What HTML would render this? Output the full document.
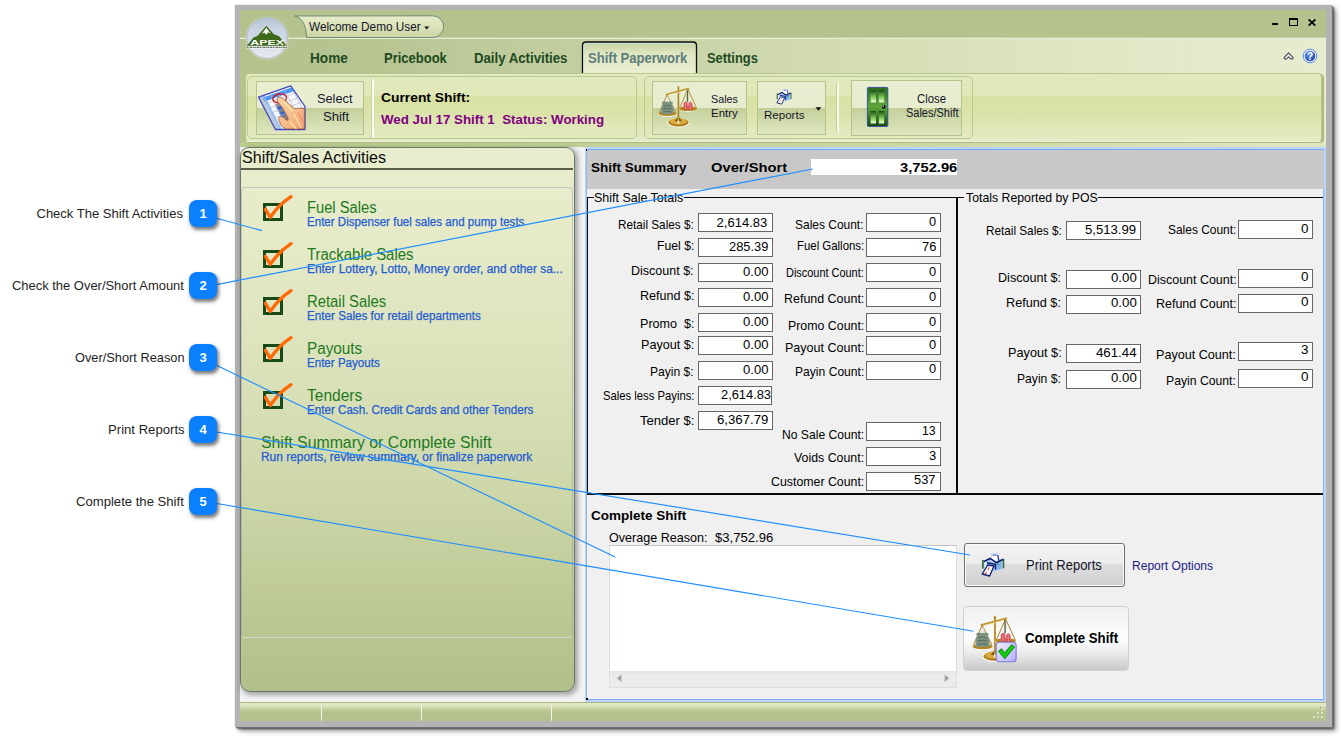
<!DOCTYPE html>
<html>
<head>
<meta charset="utf-8">
<title>Shift Paperwork</title>
<style>
*{box-sizing:border-box;margin:0;padding:0}
html,body{width:1341px;height:736px;overflow:hidden;background:#fff}
body{font-family:"Liberation Sans",sans-serif;font-size:12px;color:#000;position:relative}
.a{position:absolute}
.t{position:absolute;white-space:nowrap;transform-origin:0 0}
svg{overflow:visible}
</style>
</head>
<body>
<div class="a" style="left:235px;top:5px;width:1097px;height:722px;background:#b3b3b3;box-shadow:-1px -1px 0 #f2f2f2, 1px 1px 0 #707070, 2px 2px 2px rgba(0,0,0,.6), 4px 4px 5px rgba(0,0,0,.4);"></div>
<div class="a" style="left:240px;top:10px;width:1086px;height:711px;background:#b4c28e;"></div>
<div class="a" style="left:240px;top:37px;width:1086px;height:2px;background:linear-gradient(180deg,#c6d0a8 0,#c6d0a8 50%,#e9edd8 50%,#e9edd8 100%);"></div>
<div class="a" style="left:240px;top:39px;width:1086px;height:108px;background:linear-gradient(90deg,#b4c28e 0,#b6c491 10%,#c5d0a3 35%,#d6deb8 60%,#e3e9c8 85%,#e7ecce 100%);"></div>
<svg class="a" style="left:290px;top:12px" width="160" height="30" viewBox="290 12 160 30">
<defs><linearGradient id="wg" x1="0" y1="0" x2="0" y2="1"><stop offset="0" stop-color="#e6ecca"/><stop offset=".45" stop-color="#dde4bb"/><stop offset="1" stop-color="#cbd5a4"/></linearGradient></defs>
<path d="M294.5 16 C303 18 306 26 306.5 37.5 L432.800 37.500 A10.850 10.850 0 0 0 432.800 15.800 Z" fill="url(#wg)" stroke="#6f8a78" stroke-width="1"/>
<path d="M424.2 26.6 h5 l-2.5 2.8 z" fill="#111"/>
</svg>
<span class="t" style="left:308.80px;top:21.00px;font-size:12.5px;line-height:12.5px;transform:scaleX(0.9414);color:#141428;">Welcome Demo User</span>
<div class="a" style="left:1271.8px;top:22.6px;width:6.2000000000000455px;height:2.5px;background:#000;border-radius:.8px;"></div>
<div class="a" style="left:1289px;top:18px;width:9px;height:8px;border:1px solid #000;border-top-width:2px;"></div>
<svg class="a" style="left:1307px;top:18px" width="10" height="9" viewBox="0 0 10 9"><path d="M1.600 1.500 L8.400 7.600 M8.400 1.500 L1.600 7.600" stroke="#000" stroke-width="1.700"/></svg>
<svg class="a" style="left:1282px;top:50px" width="14" height="12" viewBox="0 0 14 12"><path d="M2.300 7.300 L6.600 2.900 L10.900 7.300 Q11.300 8.900 9.600 9.100 Q8.500 9.100 6.600 6.900 Q4.700 9.100 3.600 9.100 Q1.900 8.900 2.300 7.300 Z" fill="#f6fae0" stroke="#454e68" stroke-width="1.200" stroke-linejoin="round"/></svg>
<svg class="a" style="left:1302px;top:48px" width="16" height="16" viewBox="0 0 16 16">
<defs><radialGradient id="hg" cx=".4" cy=".35" r=".7"><stop offset="0" stop-color="#6f9cf0"/><stop offset="1" stop-color="#1c3fb0"/></radialGradient></defs>
<circle cx="8" cy="8" r="6.8" fill="#fff" stroke="#4b86e8" stroke-width="1"/><circle cx="8" cy="8" r="5.3" fill="url(#hg)"/>
<text x="8" y="11.6" font-family="Liberation Sans" font-weight="bold" font-size="10" text-anchor="middle" fill="#fff">?</text></svg>
<span class="t" style="left:310.10px;top:51.00px;font-size:14px;line-height:14px;transform:scaleX(0.9718);font-weight:bold;color:#1f4a22;">Home</span>
<span class="t" style="left:383.90px;top:51.00px;font-size:14px;line-height:14px;transform:scaleX(0.9278);font-weight:bold;color:#1f4a22;">Pricebook</span>
<span class="t" style="left:473.80px;top:51.00px;font-size:14px;line-height:14px;transform:scaleX(0.9428);font-weight:bold;color:#1f4a22;">Daily Activities</span>
<svg class="a" style="left:580px;top:39px" width="120" height="36" viewBox="580 39 120 36">
<defs><linearGradient id="tg" x1="0" y1="0" x2="0" y2="1"><stop offset="0" stop-color="#c4cfa2"/><stop offset=".35" stop-color="#dfe6c0"/><stop offset="1" stop-color="#e9eed2"/></linearGradient></defs>
<path d="M582.5 74 L582.5 45.5 Q582.5 42 586 42 L693 42 Q696.5 42 696.5 45.5 L696.5 74 Z" fill="url(#tg)"/>
<path d="M582.5 73 L582.5 45.5 Q582.5 42 586 42 L693 42 Q696.5 42 696.5 45.5 L696.5 73" fill="none" stroke="#0c0c0c" stroke-width="1.3"/>
<path d="M584 73 L584 46 Q584 43.6 586.5 43.6 L692.5 43.6" fill="none" stroke="#c8eef0" stroke-width="1" opacity=".8"/>
</svg>
<span class="t" style="left:587.80px;top:51.00px;font-size:14px;line-height:14px;transform:scaleX(0.9317);font-weight:bold;color:#5c7d7c;">Shift Paperwork</span>
<span class="t" style="left:706.80px;top:51.00px;font-size:14px;line-height:14px;transform:scaleX(0.9216);font-weight:bold;color:#1f4a22;">Settings</span>
<div class="a" style="left:246px;top:74px;width:1078px;height:69px;background:#a9b981;border-radius:4px;"></div>
<div class="a" style="left:245px;top:73px;width:1077px;height:69px;border-radius:4px;border:1px solid #b7c78e;background:linear-gradient(180deg,#e2e9bd 0,#e0e8b8 32%,#d8e0a2 32.5%,#dbe3ab 60%,#e5ebc6 100%);"></div>
<div class="a" style="left:240px;top:143px;width:1086px;height:4px;background:linear-gradient(90deg,#bccd8f 0,#c1d194 30%,#cad79f 60%,#dbe3b9 90%,#dfe6c0 100%);"></div>
<div class="a" style="left:246px;top:141px;width:1075px;height:1px;background:#edf1d8;"></div>
<div class="a" style="left:247px;top:76px;width:390px;height:63px;border:1px solid #b9c992;border-radius:5px;"></div>
<div class="a" style="left:644px;top:76px;width:329px;height:63px;border:1px solid #b9c992;border-radius:5px;"></div>
<div class="a" style="left:256px;top:80.5px;width:108px;height:54.0px;border:1px solid #b3c48b;background:linear-gradient(180deg,#e9eed2 0,#e7ecce 50.9%,#c3cf9b 50.9%,#d1dbad 75%,#e0e7c2 100%);"></div>
<div class="a" style="left:652px;top:80.5px;width:95px;height:54.0px;border:1px solid #b3c48b;background:linear-gradient(180deg,#e9eed2 0,#e7ecce 50.9%,#c3cf9b 50.9%,#d1dbad 75%,#e0e7c2 100%);"></div>
<div class="a" style="left:757px;top:80.5px;width:69px;height:54.0px;border:1px solid #b3c48b;background:linear-gradient(180deg,#e9eed2 0,#e7ecce 50.9%,#c3cf9b 50.9%,#d1dbad 75%,#e0e7c2 100%);"></div>
<div class="a" style="left:851px;top:79.5px;width:111px;height:56.0px;border:1px solid #b3c48b;background:linear-gradient(180deg,#e9eed2 0,#e7ecce 50.9%,#c3cf9b 50.9%,#d1dbad 75%,#e0e7c2 100%);"></div>
<div class="a" style="left:371px;top:79px;width:1px;height:59px;background:#c9d4a6;"></div>
<div class="a" style="left:372px;top:79px;width:2px;height:59px;background:#fbfcf4;"></div>
<div class="a" style="left:836px;top:83px;width:1px;height:49px;background:#c3cea0;"></div>
<div class="a" style="left:837px;top:83px;width:2px;height:49px;background:#f6f8ea;"></div>
<svg class="a" style="left:257px;top:83px" width="50" height="50" viewBox="257 83 50 50">
<defs><linearGradient id="sk" x1="0" y1="0" x2="1" y2="1"><stop offset="0" stop-color="#fbcfa6"/><stop offset=".6" stop-color="#f7b98a"/><stop offset="1" stop-color="#f0a070"/></linearGradient>
<clipPath id="sc"><path d="M258.6 97.2 L290.7 85.9 L305 106.5 L305 129.5 L275.4 129.5 Z"/></clipPath></defs>
<path d="M258.6 97.2 L290.7 85.9 L305 106.5 L305 129.5 L275.4 129.5 Z" fill="#f7f8fc"/>
<g clip-path="url(#sc)">
<path d="M260.5 98.600 L291.500 87.600 L293.800 91.200 L262.600 102.200 Z" fill="#4a94f2"/>
<path d="M258.600 97.200 L261.800 96.200 L279 129.500 L275.400 129.500 Z" fill="#c4c8d0"/>
<path d="M261.800 96.200 L264.600 95.200 L282 129.500 L279 129.500 Z" fill="#7fb2f4" opacity=".8"/>
<path d="M274.800 104.500 L280.800 102.400 L294 128 L287.800 130.200 Z" fill="#7e8288"/>
<path d="M276.600 107.800 L281.400 106.100 L283.200 109.600 L278.400 111.300 Z M279.200 113 L284 111.300 L285.800 114.800 L281 116.500 Z" fill="#2f62d0"/>
<path d="M266 103.500 L296.500 92.500 M268.500 108.300 L299.500 97.300 M271 113.100 L302.500 102 M273.500 118 L305 107 M270 94 L288 129 M277 91.500 L295 126.500 M284 89 L302 124 M291 86.500 L308 119.500" stroke="#b6bccb" stroke-width=".7" fill="none"/>
</g>
<path d="M258.600 97.200 L290.700 85.900 L305 106.500 L305 129.500 L275.400 129.500 Z" fill="none" stroke="#3d49c6" stroke-width="1.300" stroke-linejoin="round"/>
<ellipse cx="279.700" cy="98.400" rx="6.900" ry="4.500" fill="none" stroke="#c81c24" stroke-width="1.400" transform="rotate(-8 279.700 98.400)"/>
<path d="M278.100 97.200 Q280.400 96.600 282.600 98.400 L288.300 103.300 L294 108.600 Q298.900 107.600 304.400 108.800 L304.400 129 L285.900 129 Q282.200 127.600 281 125.300 L278.900 120.400 Q278.300 118 279.300 117.100 Q280 116 282.600 116.700 L285.900 119.600 L287.500 120.400 L288.300 118.700 L285.900 113.900 L282.600 108.200 L278.100 102.400 Q276.600 100.400 277.300 99.200 Q277.400 97.800 278.100 97.200 Z" fill="url(#sk)" stroke="#8e4a22" stroke-width=".7" stroke-linejoin="round"/>
<path d="M283 101 L292.500 111 M294 114.500 L301 127 M290 122 L296 128.500" stroke="#fdf0a8" stroke-width="1.300" fill="none" stroke-linecap="round" opacity=".9"/>
<path d="M298 112 L302.500 121" stroke="#f08868" stroke-width="1.100" fill="none" stroke-linecap="round" opacity=".7"/>
</svg>
<span class="t" style="left:317.40px;top:93.00px;font-size:12.5px;line-height:12.5px;transform:scaleX(1.0218);color:#15152a;">Select</span>
<span class="t" style="left:322.50px;top:111.00px;font-size:12.5px;line-height:12.5px;transform:scaleX(1.0435);color:#15152a;">Shift</span>
<span class="t" style="left:380.90px;top:92.00px;font-size:12px;line-height:12px;transform:scaleX(1.1523);font-weight:bold;">Current Shift:</span>
<span class="t" style="left:380.90px;top:114.00px;font-size:12px;line-height:12px;transform:scaleX(1.1104);font-weight:bold;color:#800080;white-space:pre;">Wed Jul 17 Shift 1  Status: Working</span>
<svg class="a" style="left:658px;top:86px" width="41" height="42" viewBox="0 0 41 42"><g>
<ellipse cx="20.5" cy="36.6" rx="11.2" ry="4.9" fill="#fff" opacity=".9"/>
<ellipse cx="20.5" cy="36.3" rx="10.3" ry="4.1" fill="#b07e18"/>
<ellipse cx="20.2" cy="35.3" rx="8.8" ry="3" fill="#d9ab40"/>
<path d="M16.6 35.2 L20.4 30.4 L24.2 35.2 Z" fill="#7a5a12"/>
<path d="M20.4 31.2 L19.2 37.8 L21.6 37.8 Z" fill="#f4e4b0"/>
<circle cx="20.400" cy="1.300" r="1.100" fill="#c9a040"/>
<path d="M20.400 1.500 L20.400 33" stroke="#a47a1c" stroke-width="1.600"/>
<path d="M19.8 3 L19.8 33" stroke="#e8c868" stroke-width=".5"/>
<path d="M8.5 8.5 L30.5 2.7" stroke="#c0962e" stroke-width="1.8" stroke-linecap="round"/>
<path d="M8.5 9.6 L30.5 3.8" stroke="#f6ecc8" stroke-width=".6"/>
<path d="M9.1 8.8 L1.2 26.6 M9.1 8.8 L17.8 26.6" stroke="#b08834" stroke-width=".9"/>
<path d="M29.9 3.2 L21.6 22 M29.9 3.2 L38.6 22" stroke="#b08834" stroke-width=".9"/>
<path d="M29.5 4.2 L29.5 16" stroke="#4e6a4a" stroke-width="1.3"/>
<ellipse cx="9.5" cy="28" rx="9.5" ry="2.9" fill="#fff" opacity=".8"/>
<ellipse cx="9.5" cy="27.6" rx="9" ry="2.5" fill="#b5841c"/>
<path d="M4.8 18.400 Q2.600 16 5.200 15.400 L13.400 15.400 Q16 16 14 18.400 Q17 23 14.800 28.200 L4 28.200 Q1.800 23 4.800 18.400 Z" fill="#7d9382"/>
<path d="M5.600 20 Q9.400 18.400 13 20 M5 23 Q9.400 21.400 13.800 23 M5.400 26 Q9.400 24.600 13.400 26" stroke="#5b7060" stroke-width="1" fill="none"/>
<path d="M7.600 15.400 L8.600 11.400 L10.600 11.400 L11.400 15.400 Z" fill="#e4e8e4"/>
<ellipse cx="30.1" cy="23.100" rx="9.500" ry="2.800" fill="#fff" opacity=".8"/>
<ellipse cx="30.1" cy="22.700" rx="9" ry="2.400" fill="#b5841c"/>
<path d="M25.600 17.200 L27.600 15.200 L29.600 17 L29.800 23.600 L25.600 23.400 Z M30.400 17.400 L32.200 15.600 L34.400 17.600 L34.400 23.400 L30.400 23.800 Z" fill="#d94f5c"/>
<path d="M27.400 17 L27.600 23 M32.200 17.200 L32.400 23.200" stroke="#f29aa0" stroke-width=".8"/>
</g></svg>
<span class="t" style="left:711.40px;top:94.00px;font-size:11.5px;line-height:11.5px;transform:scaleX(0.9386);color:#15152a;">Sales</span>
<span class="t" style="left:710.60px;top:108.00px;font-size:11.5px;line-height:11.5px;transform:scaleX(0.9948);color:#15152a;">Entry</span>
<svg class="a" style="left:776px;top:88px" width="16" height="17" viewBox="0 0 24 25"><g>
<rect x="1" y="8" width="1.900" height="8.500" fill="#3c6c3c"/>
<rect x="21.400" y="6.800" width="1.900" height="9.500" fill="#3c6c3c"/>
<path d="M2.800 9 L10 6 L21.500 8 L21.500 17 L13 19.500 L2.800 16 Z" fill="#a9cff6"/>
<path d="M14 10.500 L20.400 9 L20.400 16.600 L14 18.400 Z" fill="#7fb0ee"/>
<path d="M3.600 10 L5.200 9.500 L5.200 16 L3.600 15.500 Z" fill="#e8f4ff"/>
<path d="M10.500 1.500 L16.800 1 L18.200 9 L10 10 Z" fill="#fff" stroke="#a9b8d8" stroke-width=".5"/>
<path d="M11.600 3.200 L15.600 2.800" stroke="#3a62c4" stroke-width="1.300"/>
<path d="M16.600 3 L17.800 8.500" stroke="#1c3a9c" stroke-width="1.200"/>
<path d="M3 9.600 L9 6.400 L15.400 10.600 L22 7.400" fill="none" stroke="#0c1c6c" stroke-width="1.700" stroke-linejoin="round"/>
<path d="M6 10.800 L14.400 12.400 L14.400 17.600" fill="none" stroke="#0c1c6c" stroke-width="1.400"/>
<path d="M6.800 13 L13 14 L8.600 24 L1.200 22 Z" fill="#fff" stroke="#0c1c6c" stroke-width="1.300" stroke-linejoin="round"/>
<path d="M8.200 15.200 L7 18.400 M5.800 20 L3.800 22" stroke="#f05050" stroke-width="1.100"/>
<circle cx="16.800" cy="12.200" r=".8" fill="#0a8a2a"/>
</g></svg>
<span class="t" style="left:763.80px;top:110.00px;font-size:11.5px;line-height:11.5px;transform:scaleX(1.0033);color:#15152a;">Reports</span>
<svg class="a" style="left:815px;top:107px" width="7" height="5" viewBox="0 0 7 5"><path d="M.4 .3 h6 l-3 3.400 z" fill="#111"/></svg>
<svg class="a" style="left:866px;top:86px" width="24" height="42" viewBox="866 86 24 42">
<defs><linearGradient id="dg" x1="0" y1="0" x2="0" y2="1"><stop offset="0" stop-color="#2a6a20"/><stop offset=".5" stop-color="#5fa63c"/><stop offset="1" stop-color="#164412"/></linearGradient>
<linearGradient id="dp" x1="0" y1="0" x2="0" y2="1"><stop offset="0" stop-color="#184a14"/><stop offset=".55" stop-color="#7cc458"/><stop offset="1" stop-color="#eaffd2"/></linearGradient></defs>
<rect x="867.400" y="87.400" width="20.400" height="39" rx="1" fill="url(#dg)" stroke="#37569c" stroke-width="1"/>
<rect x="870.600" y="90" width="5.400" height="12.500" fill="url(#dp)"/><rect x="878.800" y="90" width="5.400" height="12.500" fill="url(#dp)"/>
<rect x="870.600" y="111" width="5.400" height="12.500" fill="url(#dp)"/><rect x="878.800" y="111" width="5.400" height="12.500" fill="url(#dp)"/>
<circle cx="883.800" cy="106.800" r="1.900" fill="#0c0c0c"/><circle cx="883.300" cy="106.200" r=".7" fill="#e8f4d8"/>
</svg>
<span class="t" style="left:917.30px;top:93.00px;font-size:12px;line-height:12px;transform:scaleX(0.9453);color:#15152a;">Close</span>
<span class="t" style="left:905.90px;top:107.00px;font-size:12px;line-height:12px;transform:scaleX(0.9152);color:#15152a;">Sales/Shift</span>
<svg class="a" style="left:244px;top:15px" width="46" height="46" viewBox="244 15 46 46">
<defs><linearGradient id="lg" x1="0" y1="0" x2="0" y2="1"><stop offset="0" stop-color="#b4c2d6"/><stop offset=".3" stop-color="#cbd5e3"/><stop offset=".52" stop-color="#cfd8e4"/><stop offset=".56" stop-color="#d6dce6"/><stop offset="1" stop-color="#e6e9ee"/></linearGradient></defs>
<circle cx="267.100" cy="38.100" r="21.600" fill="#cdd7b2"/>
<circle cx="267.100" cy="38.100" r="20.300" fill="url(#lg)" stroke="#9fabbb" stroke-width=".7"/>
<path d="M246.900 45.700 L253.500 37.600 L257.600 35.800 L266.400 25.800 L273.600 34 L279.400 36.600 L286.500 45.700 Z" fill="#3f6a1c"/>
<path d="M266.400 27.800 L261.800 33.800 L264.300 32.500 L266.200 34.700 L268 32.300 L270.700 33.700 Z" fill="#fff"/>
<text x="250.300" y="45.300" font-family="Liberation Sans" font-weight="bold" font-size="7.400" fill="#fff" textLength="33.600" lengthAdjust="spacingAndGlyphs">APEX</text>
<path d="M246 47.300 H287.400" stroke="#fff" stroke-width="2.400" opacity=".75"/>
<path d="M246.600 47.300 H287" stroke="#2f4220" stroke-width="1.100" stroke-dasharray="1.500 .6 .9 .6 2.200 .7"/>
</svg>
<div class="a" style="left:240px;top:147px;width:345px;height:555px;background:#f3f3f3;"></div>
<div class="a" style="left:240px;top:147px;width:335px;height:545px;border:1px solid #66796a;border-radius:9px 9px 10px 10px;box-shadow:2px 2px 5px 1px rgba(0,0,0,.33);background:linear-gradient(180deg,#e9edce 0,#e4e9c6 20%,#d9e0b8 45%,#ccd6a8 65%,#bcc895 85%,#b2bf8a 100%);"></div>
<span class="t" style="left:242.00px;top:149.00px;font-size:17px;line-height:17px;transform:scaleX(0.9474);color:#0c0c0c;">Shift/Sales Activities</span>
<div class="a" style="left:241px;top:168px;width:332px;height:2px;background:#5c5c48;"></div>
<div class="a" style="left:241px;top:187px;width:332px;height:451px;border:1px solid rgba(150,150,175,.45);border-radius:4px;border-bottom-color:rgba(215,220,215,.9);"></div>
<div class="a" style="left:263px;top:203px;width:20px;height:18px;border:3px solid #184a18;"></div>
<svg class="a" style="left:260px;top:192px" width="36" height="30" viewBox="260 192 36 30"><path d="M265.400 209.400 L270.300 217.400 C275.500 209.500 283 202 291 196.700" fill="none" stroke="#ff6a06" stroke-width="3.400" stroke-linecap="round" stroke-linejoin="round"/></svg>
<span class="t" style="left:306.90px;top:200.00px;font-size:16px;line-height:16px;transform:scaleX(0.9194);color:#1d7a1d;">Fuel Sales</span>
<span class="t" style="left:306.90px;top:216.00px;font-size:12px;line-height:12px;transform:scaleX(0.9643);color:#1f5cd2;-webkit-text-stroke:.25px #1f5cd2;">Enter Dispenser fuel sales and pump tests</span>
<div class="a" style="left:263px;top:250px;width:20px;height:18px;border:3px solid #184a18;"></div>
<svg class="a" style="left:260px;top:239px" width="36" height="30" viewBox="260 192 36 30"><path d="M265.400 209.400 L270.300 217.400 C275.500 209.500 283 202 291 196.700" fill="none" stroke="#ff6a06" stroke-width="3.400" stroke-linecap="round" stroke-linejoin="round"/></svg>
<span class="t" style="left:306.90px;top:247.00px;font-size:16px;line-height:16px;transform:scaleX(0.9332);color:#1d7a1d;">Trackable Sales</span>
<span class="t" style="left:306.90px;top:263.00px;font-size:12px;line-height:12px;transform:scaleX(0.9914);color:#1f5cd2;-webkit-text-stroke:.25px #1f5cd2;">Enter Lottery, Lotto, Money order, and other sa...</span>
<div class="a" style="left:263px;top:297px;width:20px;height:18px;border:3px solid #184a18;"></div>
<svg class="a" style="left:260px;top:286px" width="36" height="30" viewBox="260 192 36 30"><path d="M265.400 209.400 L270.300 217.400 C275.500 209.500 283 202 291 196.700" fill="none" stroke="#ff6a06" stroke-width="3.400" stroke-linecap="round" stroke-linejoin="round"/></svg>
<span class="t" style="left:306.90px;top:294.00px;font-size:16px;line-height:16px;transform:scaleX(0.9277);color:#1d7a1d;">Retail Sales</span>
<span class="t" style="left:306.90px;top:310.00px;font-size:12px;line-height:12px;transform:scaleX(0.9729);color:#1f5cd2;-webkit-text-stroke:.25px #1f5cd2;">Enter Sales for retail departments</span>
<div class="a" style="left:263px;top:344px;width:20px;height:18px;border:3px solid #184a18;"></div>
<svg class="a" style="left:260px;top:333px" width="36" height="30" viewBox="260 192 36 30"><path d="M265.400 209.400 L270.300 217.400 C275.500 209.500 283 202 291 196.700" fill="none" stroke="#ff6a06" stroke-width="3.400" stroke-linecap="round" stroke-linejoin="round"/></svg>
<span class="t" style="left:306.90px;top:341.00px;font-size:16px;line-height:16px;transform:scaleX(0.9548);color:#1d7a1d;">Payouts</span>
<span class="t" style="left:306.90px;top:357.00px;font-size:12px;line-height:12px;transform:scaleX(0.9645);color:#1f5cd2;-webkit-text-stroke:.25px #1f5cd2;">Enter Payouts</span>
<div class="a" style="left:263px;top:391px;width:20px;height:18px;border:3px solid #184a18;"></div>
<svg class="a" style="left:260px;top:380px" width="36" height="30" viewBox="260 192 36 30"><path d="M265.400 209.400 L270.300 217.400 C275.500 209.500 283 202 291 196.700" fill="none" stroke="#ff6a06" stroke-width="3.400" stroke-linecap="round" stroke-linejoin="round"/></svg>
<span class="t" style="left:306.90px;top:388.00px;font-size:16px;line-height:16px;transform:scaleX(0.9698);color:#1d7a1d;">Tenders</span>
<span class="t" style="left:306.90px;top:404.00px;font-size:12px;line-height:12px;transform:scaleX(0.9679);color:#1f5cd2;-webkit-text-stroke:.25px #1f5cd2;">Enter Cash. Credit Cards and other Tenders</span>
<span class="t" style="left:260.90px;top:435.00px;font-size:16px;line-height:16px;transform:scaleX(0.9898);color:#1d7a1d;">Shift Summary or Complete Shift</span>
<span class="t" style="left:260.90px;top:451.00px;font-size:12px;line-height:12px;transform:scaleX(0.9927);color:#1f5cd2;-webkit-text-stroke:.25px #1f5cd2;">Run reports, review summary, or finalize paperwork</span>
<div class="a" style="left:240px;top:702px;width:1086px;height:19px;background:linear-gradient(180deg,#a9b87e 0,#a9b87e 5%,#e1e8c5 6%,#dde4be 20%,#c5d09f 38%,#b7c591 50%,#b4c28e 60%,#b4c28e 100%);"></div>
<div class="a" style="left:321px;top:703px;width:1px;height:18px;background:linear-gradient(180deg,rgba(250,252,240,.35),#f7f9ec 35%,#f4f7e6 80%,rgba(244,247,230,.5));"></div>
<div class="a" style="left:421px;top:703px;width:1px;height:18px;background:linear-gradient(180deg,rgba(250,252,240,.35),#f7f9ec 35%,#f4f7e6 80%,rgba(244,247,230,.5));"></div>
<div class="a" style="left:551px;top:703px;width:1px;height:18px;background:linear-gradient(180deg,rgba(250,252,240,.35),#f7f9ec 35%,#f4f7e6 80%,rgba(244,247,230,.5));"></div>
<div class="a" style="left:1320px;top:707px;width:2px;height:2px;background:#9dac79;"></div>
<div class="a" style="left:1321px;top:708px;width:2px;height:2px;background:#dde5c6;"></div>
<div class="a" style="left:1317px;top:712px;width:2px;height:2px;background:#dde5c6;"></div>
<div class="a" style="left:1321px;top:712px;width:2px;height:2px;background:#dde5c6;"></div>
<div class="a" style="left:1313px;top:716px;width:2px;height:2px;background:#dde5c6;"></div>
<div class="a" style="left:1317px;top:716px;width:2px;height:2px;background:#dde5c6;"></div>
<div class="a" style="left:1321px;top:716px;width:2px;height:2px;background:#dde5c6;"></div>
<div class="a" style="left:585px;top:147px;width:741px;height:555px;background:#f0f0f0;border:2px solid #bad5fc;border-left-width:1px;"></div>
<div class="a" style="left:586px;top:149px;width:738px;height:551px;border:1px solid #7ba7ee;border-left-color:#8fb5f0;border-right-color:#8fb5f0;"></div>
<div class="a" style="left:586px;top:698px;width:2px;height:2px;background:#000;"></div>
<div class="a" style="left:586px;top:149px;width:1px;height:2px;background:#000;"></div>
<div class="a" style="left:587px;top:150px;width:737px;height:39px;background:#c8c8c8;"></div>
<span class="t" style="left:591.10px;top:161.00px;font-size:13px;line-height:13px;transform:scaleX(1.0410);font-weight:bold;">Shift Summary</span>
<span class="t" style="left:711.20px;top:161.00px;font-size:13px;line-height:13px;transform:scaleX(1.1342);font-weight:bold;">Over/Short</span>
<div class="a" style="left:811px;top:159px;width:146px;height:16px;background:#fff;"></div>
<span class="t" style="left:900.20px;top:161.00px;font-size:13px;line-height:13px;transform:scaleX(1.1323);font-weight:bold;">3,752.96</span>
<div class="a" style="left:587px;top:197px;width:7px;height:1px;background:#0a0a0a;"></div>
<div class="a" style="left:684px;top:197px;width:280px;height:1px;background:#0a0a0a;"></div>
<div class="a" style="left:1098px;top:197px;width:225px;height:1px;background:#0a0a0a;"></div>
<div class="a" style="left:587px;top:197px;width:1px;height:298px;background:#0a0a0a;"></div>
<div class="a" style="left:956px;top:197px;width:2px;height:298px;background:#0a0a0a;"></div>
<div class="a" style="left:587px;top:493.4px;width:736px;height:1.6000000000000227px;background:#0a0a0a;"></div>
<span class="t" style="left:594.30px;top:191.00px;font-size:13px;line-height:13px;transform:scaleX(0.9591);">Shift Sale Totals</span>
<span class="t" style="left:965.60px;top:191.00px;font-size:13px;line-height:13px;transform:scaleX(0.9451);">Totals Reported by POS</span>
<span class="t" style="left:618.30px;top:218.00px;font-size:13px;line-height:13px;transform:scaleX(0.9031);white-space:pre;">Retail Sales $:</span>
<div class="a" style="left:698px;top:213px;width:75px;height:19px;background:#fff;border:1px solid #666;"></div>
<span class="t" style="left:716.60px;top:216.00px;font-size:13px;line-height:13px;">2,614.83</span>
<span class="t" style="left:656.60px;top:239.00px;font-size:13px;line-height:13px;transform:scaleX(0.9411);white-space:pre;">Fuel $:</span>
<div class="a" style="left:698px;top:238px;width:75px;height:19px;background:#fff;border:1px solid #666;"></div>
<span class="t" style="left:728.70px;top:240.00px;font-size:13px;line-height:13px;transform:scaleX(0.9884);">285.39</span>
<span class="t" style="left:631.40px;top:264.00px;font-size:13px;line-height:13px;transform:scaleX(0.9626);white-space:pre;">Discount $:</span>
<div class="a" style="left:698px;top:263px;width:75px;height:19px;background:#fff;border:1px solid #666;"></div>
<span class="t" style="left:742.70px;top:265.00px;font-size:13px;line-height:13px;transform:scaleX(1.0039);">0.00</span>
<span class="t" style="left:639.50px;top:289.00px;font-size:13px;line-height:13px;transform:scaleX(0.9668);white-space:pre;">Refund $:</span>
<div class="a" style="left:698px;top:288px;width:75px;height:19px;background:#fff;border:1px solid #666;"></div>
<span class="t" style="left:742.70px;top:290.00px;font-size:13px;line-height:13px;transform:scaleX(1.0039);">0.00</span>
<span class="t" style="left:639.50px;top:317.00px;font-size:13px;line-height:13px;transform:scaleX(0.9671);white-space:pre;">Promo  $:</span>
<div class="a" style="left:698px;top:313px;width:75px;height:19px;background:#fff;border:1px solid #666;"></div>
<span class="t" style="left:742.70px;top:315.00px;font-size:13px;line-height:13px;transform:scaleX(1.0039);">0.00</span>
<span class="t" style="left:640.70px;top:338.00px;font-size:13px;line-height:13px;transform:scaleX(0.9704);white-space:pre;">Payout $:</span>
<div class="a" style="left:698px;top:336px;width:75px;height:19px;background:#fff;border:1px solid #666;"></div>
<span class="t" style="left:742.70px;top:338.00px;font-size:13px;line-height:13px;transform:scaleX(1.0039);">0.00</span>
<span class="t" style="left:650.30px;top:365.00px;font-size:13px;line-height:13px;transform:scaleX(0.9303);white-space:pre;">Payin $:</span>
<div class="a" style="left:698px;top:361px;width:75px;height:19px;background:#fff;border:1px solid #666;"></div>
<span class="t" style="left:742.70px;top:363.00px;font-size:13px;line-height:13px;transform:scaleX(1.0039);">0.00</span>
<span class="t" style="left:602.50px;top:389.00px;font-size:13px;line-height:13px;transform:scaleX(0.8674);white-space:pre;">Sales less Payins:</span>
<div class="a" style="left:698px;top:386px;width:74px;height:19px;background:#fff;border:1px solid #666;"></div>
<span class="t" style="left:721.00px;top:388.00px;font-size:13px;line-height:13px;transform:scaleX(0.9881);">2,614.83</span>
<span class="t" style="left:639.50px;top:414.00px;font-size:13px;line-height:13px;transform:scaleX(1.0055);white-space:pre;">Tender $:</span>
<div class="a" style="left:698px;top:411px;width:75px;height:19px;background:#fff;border:1px solid #666;"></div>
<span class="t" style="left:717.30px;top:413.00px;font-size:13px;line-height:13px;transform:scaleX(1.0138);">6,367.79</span>
<span class="t" style="left:795.40px;top:218.00px;font-size:13px;line-height:13px;transform:scaleX(0.9203);white-space:pre;">Sales Count:</span>
<div class="a" style="left:866px;top:213px;width:75px;height:19px;background:#fff;border:1px solid #666;"></div>
<span class="t" style="left:929.00px;top:215.00px;font-size:13px;line-height:13px;transform:scaleX(0.9820);">0</span>
<span class="t" style="left:796.70px;top:239.00px;font-size:13px;line-height:13px;transform:scaleX(0.8774);white-space:pre;">Fuel Gallons:</span>
<div class="a" style="left:866px;top:238px;width:75px;height:19px;background:#fff;border:1px solid #666;"></div>
<span class="t" style="left:921.70px;top:240.00px;font-size:13px;line-height:13px;transform:scaleX(0.9959);">76</span>
<span class="t" style="left:785.60px;top:267.00px;font-size:12px;line-height:12px;transform:scaleX(0.9101);white-space:pre;">Discount Count:</span>
<div class="a" style="left:866px;top:263px;width:75px;height:19px;background:#fff;border:1px solid #666;"></div>
<span class="t" style="left:929.00px;top:265.00px;font-size:13px;line-height:13px;transform:scaleX(0.9820);">0</span>
<span class="t" style="left:783.60px;top:292.00px;font-size:13px;line-height:13px;transform:scaleX(0.9579);white-space:pre;">Refund Count:</span>
<div class="a" style="left:866px;top:288px;width:75px;height:19px;background:#fff;border:1px solid #666;"></div>
<span class="t" style="left:929.00px;top:290.00px;font-size:13px;line-height:13px;transform:scaleX(0.9820);">0</span>
<span class="t" style="left:787.60px;top:319.00px;font-size:13px;line-height:13px;transform:scaleX(0.9513);white-space:pre;">Promo Count:</span>
<div class="a" style="left:866px;top:313px;width:75px;height:19px;background:#fff;border:1px solid #666;"></div>
<span class="t" style="left:929.00px;top:315.00px;font-size:13px;line-height:13px;transform:scaleX(0.9820);">0</span>
<span class="t" style="left:784.50px;top:341.00px;font-size:13px;line-height:13px;transform:scaleX(0.9638);white-space:pre;">Payout Count:</span>
<div class="a" style="left:866px;top:336px;width:75px;height:19px;background:#fff;border:1px solid #666;"></div>
<span class="t" style="left:929.00px;top:338.00px;font-size:13px;line-height:13px;transform:scaleX(0.9820);">0</span>
<span class="t" style="left:794.60px;top:365.00px;font-size:13px;line-height:13px;transform:scaleX(0.9310);white-space:pre;">Payin Count:</span>
<div class="a" style="left:866px;top:361px;width:75px;height:19px;background:#fff;border:1px solid #666;"></div>
<span class="t" style="left:929.00px;top:362.00px;font-size:13px;line-height:13px;transform:scaleX(0.9820);">0</span>
<span class="t" style="left:781.70px;top:428.00px;font-size:13px;line-height:13px;transform:scaleX(0.9324);white-space:pre;">No Sale Count:</span>
<div class="a" style="left:866px;top:422px;width:75px;height:19px;background:#fff;border:1px solid #666;"></div>
<span class="t" style="left:922.20px;top:424.00px;font-size:13px;line-height:13px;transform:scaleX(0.9405);">13</span>
<span class="t" style="left:793.80px;top:451.00px;font-size:13px;line-height:13px;transform:scaleX(0.9510);white-space:pre;">Voids Count:</span>
<div class="a" style="left:866px;top:447px;width:75px;height:19px;background:#fff;border:1px solid #666;"></div>
<span class="t" style="left:928.60px;top:449.00px;font-size:13px;line-height:13px;transform:scaleX(0.9959);">3</span>
<span class="t" style="left:770.60px;top:475.00px;font-size:13px;line-height:13px;transform:scaleX(0.9495);white-space:pre;">Customer Count:</span>
<div class="a" style="left:866px;top:472px;width:75px;height:19px;background:#fff;border:1px solid #666;"></div>
<span class="t" style="left:914.30px;top:473.00px;font-size:13px;line-height:13px;transform:scaleX(0.9912);">537</span>
<span class="t" style="left:985.50px;top:224.00px;font-size:13px;line-height:13px;transform:scaleX(0.9031);white-space:pre;">Retail Sales $:</span>
<div class="a" style="left:1066px;top:221px;width:75px;height:19px;background:#fff;border:1px solid #666;"></div>
<span class="t" style="left:1085.40px;top:223.00px;font-size:13px;line-height:13px;transform:scaleX(1.0098);">5,513.99</span>
<span class="t" style="left:998.20px;top:271.00px;font-size:13px;line-height:13px;transform:scaleX(0.9688);white-space:pre;">Discount $:</span>
<div class="a" style="left:1066px;top:270px;width:75px;height:19px;background:#fff;border:1px solid #666;"></div>
<span class="t" style="left:1110.70px;top:271.00px;font-size:13px;line-height:13px;transform:scaleX(1.0197);">0.00</span>
<span class="t" style="left:1006.30px;top:296.00px;font-size:13px;line-height:13px;transform:scaleX(0.9739);white-space:pre;">Refund $:</span>
<div class="a" style="left:1066px;top:295px;width:75px;height:19px;background:#fff;border:1px solid #666;"></div>
<span class="t" style="left:1110.70px;top:296.00px;font-size:13px;line-height:13px;transform:scaleX(1.0197);">0.00</span>
<span class="t" style="left:1007.50px;top:346.00px;font-size:13px;line-height:13px;transform:scaleX(0.9777);white-space:pre;">Payout $:</span>
<div class="a" style="left:1066px;top:344px;width:75px;height:19px;background:#fff;border:1px solid #666;"></div>
<span class="t" style="left:1096.00px;top:346.00px;font-size:13px;line-height:13px;transform:scaleX(1.0186);">461.44</span>
<span class="t" style="left:1017.40px;top:372.00px;font-size:13px;line-height:13px;transform:scaleX(0.9325);white-space:pre;">Payin $:</span>
<div class="a" style="left:1066px;top:370px;width:75px;height:19px;background:#fff;border:1px solid #666;"></div>
<span class="t" style="left:1110.70px;top:371.00px;font-size:13px;line-height:13px;transform:scaleX(1.0197);">0.00</span>
<span class="t" style="left:1167.80px;top:223.00px;font-size:13px;line-height:13px;transform:scaleX(0.9176);white-space:pre;">Sales Count:</span>
<div class="a" style="left:1238px;top:220px;width:75px;height:19px;background:#fff;border:1px solid #666;"></div>
<span class="t" style="left:1300.70px;top:222.00px;font-size:13px;line-height:13px;transform:scaleX(1.0373);">0</span>
<span class="t" style="left:1147.50px;top:273.00px;font-size:13px;line-height:13px;transform:scaleX(0.9579);white-space:pre;">Discount Count:</span>
<div class="a" style="left:1238px;top:269px;width:75px;height:19px;background:#fff;border:1px solid #666;"></div>
<span class="t" style="left:1300.70px;top:270.00px;font-size:13px;line-height:13px;transform:scaleX(1.0373);">0</span>
<span class="t" style="left:1155.60px;top:297.00px;font-size:13px;line-height:13px;transform:scaleX(0.9602);white-space:pre;">Refund Count:</span>
<div class="a" style="left:1238px;top:294px;width:75px;height:19px;background:#fff;border:1px solid #666;"></div>
<span class="t" style="left:1300.70px;top:295.00px;font-size:13px;line-height:13px;transform:scaleX(1.0373);">0</span>
<span class="t" style="left:1156.40px;top:348.00px;font-size:13px;line-height:13px;transform:scaleX(0.9674);white-space:pre;">Payout Count:</span>
<div class="a" style="left:1238px;top:342px;width:75px;height:19px;background:#fff;border:1px solid #666;"></div>
<span class="t" style="left:1300.50px;top:343.00px;font-size:13px;line-height:13px;transform:scaleX(1.0373);">3</span>
<span class="t" style="left:1166.20px;top:374.00px;font-size:13px;line-height:13px;transform:scaleX(0.9391);white-space:pre;">Payin Count:</span>
<div class="a" style="left:1238px;top:369px;width:75px;height:19px;background:#fff;border:1px solid #666;"></div>
<span class="t" style="left:1300.70px;top:370.00px;font-size:13px;line-height:13px;transform:scaleX(1.0373);">0</span>
<span class="t" style="left:590.60px;top:509.00px;font-size:13px;line-height:13px;transform:scaleX(1.0379);font-weight:bold;">Complete Shift</span>
<span class="t" style="left:608.60px;top:531.00px;font-size:13px;line-height:13px;transform:scaleX(0.9657);">Overage Reason:</span>
<span class="t" style="left:715.30px;top:531.00px;font-size:13px;line-height:13px;transform:scaleX(1.0063);">$3,752.96</span>
<div class="a" style="left:609px;top:545px;width:348px;height:143px;background:#fff;border:1px solid #dcdde6;border-top-color:#c4c4c8;"></div>
<div class="a" style="left:610px;top:671px;width:346px;height:16px;background:linear-gradient(180deg,#e4e4e4,#ececec 30%,#eaeaea);"></div>
<svg class="a" style="left:616px;top:674px" width="6" height="9" viewBox="0 0 6 9"><path d="M5.400 .6 L5.400 8 L.8 4.300 Z" fill="#a3a3a3"/></svg>
<svg class="a" style="left:944px;top:674px" width="6" height="9" viewBox="0 0 6 9"><path d="M.6 .6 L.6 8 L5.200 4.300 Z" fill="#a3a3a3"/></svg>
<div class="a" style="left:964px;top:543px;width:161px;height:44px;border:1px solid #6e6e6e;border-radius:3px;box-shadow:inset 0 0 0 1px #fafafa;background:linear-gradient(180deg,#f3f3f3 0,#ececec 47%,#dedede 48%,#d0d0d0 100%);"></div>
<svg class="a" style="left:981px;top:552px" width="24" height="25" viewBox="0 0 24 25"><g>
<rect x="1" y="8" width="1.900" height="8.500" fill="#3c6c3c"/>
<rect x="21.400" y="6.800" width="1.900" height="9.500" fill="#3c6c3c"/>
<path d="M2.800 9 L10 6 L21.500 8 L21.500 17 L13 19.500 L2.800 16 Z" fill="#a9cff6"/>
<path d="M14 10.500 L20.400 9 L20.400 16.600 L14 18.400 Z" fill="#7fb0ee"/>
<path d="M3.600 10 L5.200 9.500 L5.200 16 L3.600 15.500 Z" fill="#e8f4ff"/>
<path d="M10.500 1.500 L16.800 1 L18.200 9 L10 10 Z" fill="#fff" stroke="#a9b8d8" stroke-width=".5"/>
<path d="M11.600 3.200 L15.600 2.800" stroke="#3a62c4" stroke-width="1.300"/>
<path d="M16.600 3 L17.800 8.500" stroke="#1c3a9c" stroke-width="1.200"/>
<path d="M3 9.600 L9 6.400 L15.400 10.600 L22 7.400" fill="none" stroke="#0c1c6c" stroke-width="1.700" stroke-linejoin="round"/>
<path d="M6 10.800 L14.400 12.400 L14.400 17.600" fill="none" stroke="#0c1c6c" stroke-width="1.400"/>
<path d="M6.800 13 L13 14 L8.600 24 L1.200 22 Z" fill="#fff" stroke="#0c1c6c" stroke-width="1.300" stroke-linejoin="round"/>
<path d="M8.200 15.200 L7 18.400 M5.800 20 L3.800 22" stroke="#f05050" stroke-width="1.100"/>
<circle cx="16.800" cy="12.200" r=".8" fill="#0a8a2a"/>
</g></svg>
<span class="t" style="left:1026.30px;top:558.00px;font-size:14px;line-height:14px;transform:scaleX(0.9278);color:#15152a;">Print Reports</span>
<span class="t" style="left:1131.80px;top:559.00px;font-size:13px;line-height:13px;transform:scaleX(0.9276);color:#1b1b86;">Report Options</span>
<div class="a" style="left:963px;top:606px;width:166px;height:65px;border:1px solid #d2d2d2;border-radius:4px;background:linear-gradient(180deg,#f1f1f1 0,#f6f6f6 25%,#fdfdfd 50%,#ececec 72%,#c9c9c9 100%);"></div>
<svg class="a" style="left:972px;top:614.500px" width="46" height="48" viewBox="0 0 41 42"><g>
<ellipse cx="20.5" cy="36.6" rx="11.2" ry="4.9" fill="#fff" opacity=".9"/>
<ellipse cx="20.5" cy="36.3" rx="10.3" ry="4.1" fill="#b07e18"/>
<ellipse cx="20.2" cy="35.3" rx="8.8" ry="3" fill="#d9ab40"/>
<path d="M16.6 35.2 L20.4 30.4 L24.2 35.2 Z" fill="#7a5a12"/>
<path d="M20.4 31.2 L19.2 37.8 L21.6 37.8 Z" fill="#f4e4b0"/>
<circle cx="20.400" cy="1.300" r="1.100" fill="#c9a040"/>
<path d="M20.400 1.500 L20.400 33" stroke="#a47a1c" stroke-width="1.600"/>
<path d="M19.8 3 L19.8 33" stroke="#e8c868" stroke-width=".5"/>
<path d="M8.5 8.5 L30.5 2.7" stroke="#c0962e" stroke-width="1.8" stroke-linecap="round"/>
<path d="M8.5 9.6 L30.5 3.8" stroke="#f6ecc8" stroke-width=".6"/>
<path d="M9.1 8.8 L1.2 26.6 M9.1 8.8 L17.8 26.6" stroke="#b08834" stroke-width=".9"/>
<path d="M29.9 3.2 L21.6 22 M29.9 3.2 L38.6 22" stroke="#b08834" stroke-width=".9"/>
<path d="M29.5 4.2 L29.5 16" stroke="#4e6a4a" stroke-width="1.3"/>
<ellipse cx="9.5" cy="28" rx="9.5" ry="2.9" fill="#fff" opacity=".8"/>
<ellipse cx="9.5" cy="27.6" rx="9" ry="2.5" fill="#b5841c"/>
<path d="M4.8 18.400 Q2.600 16 5.200 15.400 L13.400 15.400 Q16 16 14 18.400 Q17 23 14.800 28.200 L4 28.200 Q1.800 23 4.800 18.400 Z" fill="#7d9382"/>
<path d="M5.600 20 Q9.400 18.400 13 20 M5 23 Q9.400 21.400 13.800 23 M5.400 26 Q9.400 24.600 13.400 26" stroke="#5b7060" stroke-width="1" fill="none"/>
<path d="M7.600 15.400 L8.600 11.400 L10.600 11.400 L11.400 15.400 Z" fill="#e4e8e4"/>
<ellipse cx="30.1" cy="23.100" rx="9.500" ry="2.800" fill="#fff" opacity=".8"/>
<ellipse cx="30.1" cy="22.700" rx="9" ry="2.400" fill="#b5841c"/>
<path d="M25.600 17.200 L27.600 15.200 L29.600 17 L29.800 23.600 L25.600 23.400 Z M30.400 17.400 L32.200 15.600 L34.400 17.600 L34.400 23.400 L30.400 23.800 Z" fill="#d94f5c"/>
<path d="M27.400 17 L27.600 23 M32.200 17.200 L32.400 23.200" stroke="#f29aa0" stroke-width=".8"/>
</g></svg>
<svg class="a" style="left:995px;top:641px" width="22" height="24" viewBox="0 0 22 24">
<defs><linearGradient id="cb" x1="0" y1="0" x2="1" y2="1"><stop offset="0" stop-color="#f4f2ff"/><stop offset=".5" stop-color="#d2ceff"/><stop offset="1" stop-color="#b4aefa"/></linearGradient></defs>
<rect x="1.200" y="1.300" width="19.900" height="19.400" rx="3" fill="url(#cb)" stroke="#7a78e4" stroke-width="1.100"/>
<path d="M3.400 10.200 L6.600 7.800 L9.600 11.800 L16.800 3.600 L19.600 6 L9.800 17.800 Z" fill="#14cc14" stroke="#0a7a0a" stroke-width=".9" stroke-linejoin="round"/></svg>
<span class="t" style="left:1024.70px;top:631.00px;font-size:14px;line-height:14px;transform:scaleX(0.9425);font-weight:bold;">Complete Shift</span>
<svg class="a" style="left:0;top:0" width="1341" height="736" viewBox="0 0 1341 736">
<line x1="216.5" y1="218.3" x2="262" y2="230.6" stroke="#1f8fff" stroke-width="1.150"/>
<line x1="216.5" y1="284.6" x2="812.8" y2="169" stroke="#1f8fff" stroke-width="1.150"/>
<line x1="216.5" y1="365.3" x2="615.2" y2="557" stroke="#1f8fff" stroke-width="1.150"/>
<line x1="216.5" y1="432" x2="970" y2="555" stroke="#1f8fff" stroke-width="1.150"/>
<line x1="216.5" y1="503.5" x2="973.4" y2="631.2" stroke="#1f8fff" stroke-width="1.150"/>
</svg>
<div class="a" style="left:189.4px;top:200.0px;width:27.5px;height:27.400000000000006px;background:#0a80ff;border-radius:8px;box-shadow:1.500px 2.500px 3.500px rgba(0,0,0,.5);"></div>
<span class="t" style="top:207.00px;font-size:13px;line-height:13px;font-weight:bold;color:#fff;left:189.400px;width:27.500px;text-align:center;">1</span>
<span class="t" style="left:36.50px;top:207.00px;font-size:13px;line-height:13px;color:#1e1e1e;">Check The Shift Activities</span>
<div class="a" style="left:189.4px;top:271.9px;width:27.5px;height:27.400000000000034px;background:#0a80ff;border-radius:8px;box-shadow:1.500px 2.500px 3.500px rgba(0,0,0,.5);"></div>
<span class="t" style="top:279.00px;font-size:13px;line-height:13px;font-weight:bold;color:#fff;left:189.400px;width:27.500px;text-align:center;">2</span>
<span class="t" style="left:11.50px;top:279.00px;font-size:13px;line-height:13px;transform:scaleX(0.9953);color:#1e1e1e;">Check the Over/Short Amount</span>
<div class="a" style="left:189.4px;top:343.8px;width:27.5px;height:27.399999999999977px;background:#0a80ff;border-radius:8px;box-shadow:1.500px 2.500px 3.500px rgba(0,0,0,.5);"></div>
<span class="t" style="top:351.00px;font-size:13px;line-height:13px;font-weight:bold;color:#fff;left:189.400px;width:27.500px;text-align:center;">3</span>
<span class="t" style="left:74.60px;top:351.00px;font-size:13px;line-height:13px;transform:scaleX(0.9841);color:#1e1e1e;">Over/Short Reason</span>
<div class="a" style="left:189.4px;top:415.7px;width:27.5px;height:27.400000000000034px;background:#0a80ff;border-radius:8px;box-shadow:1.500px 2.500px 3.500px rgba(0,0,0,.5);"></div>
<span class="t" style="top:423.00px;font-size:13px;line-height:13px;font-weight:bold;color:#fff;left:189.400px;width:27.500px;text-align:center;">4</span>
<span class="t" style="left:107.50px;top:423.00px;font-size:13px;line-height:13px;transform:scaleX(1.0097);color:#1e1e1e;">Print Reports</span>
<div class="a" style="left:189.4px;top:487.6px;width:27.5px;height:27.399999999999977px;background:#0a80ff;border-radius:8px;box-shadow:1.500px 2.500px 3.500px rgba(0,0,0,.5);"></div>
<span class="t" style="top:495.00px;font-size:13px;line-height:13px;font-weight:bold;color:#fff;left:189.400px;width:27.500px;text-align:center;">5</span>
<span class="t" style="left:76.30px;top:495.00px;font-size:13px;line-height:13px;transform:scaleX(1.0080);color:#1e1e1e;">Complete the Shift</span>
</body>
</html>
